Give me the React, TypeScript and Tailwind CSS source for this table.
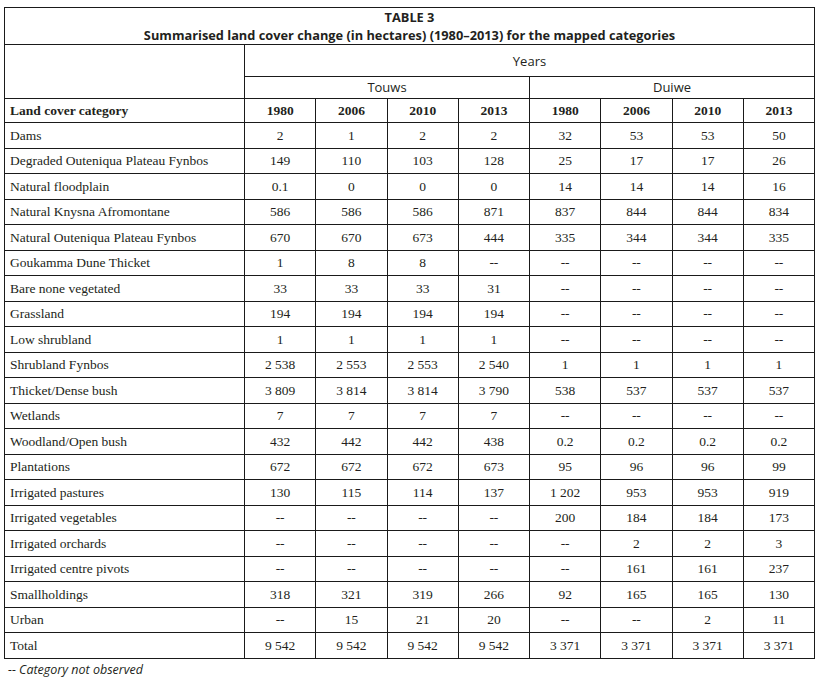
import React from "react";

const rows: [string, string[]][] = [
  ["Dams", ["2", "1", "2", "2", "32", "53", "53", "50"]],
  ["Degraded Outeniqua Plateau Fynbos", ["149", "110", "103", "128", "25", "17", "17", "26"]],
  ["Natural floodplain", ["0.1", "0", "0", "0", "14", "14", "14", "16"]],
  ["Natural Knysna Afromontane", ["586", "586", "586", "871", "837", "844", "844", "834"]],
  ["Natural Outeniqua Plateau Fynbos", ["670", "670", "673", "444", "335", "344", "344", "335"]],
  ["Goukamma Dune Thicket", ["1", "8", "8", "--", "--", "--", "--", "--"]],
  ["Bare none vegetated", ["33", "33", "33", "31", "--", "--", "--", "--"]],
  ["Grassland", ["194", "194", "194", "194", "--", "--", "--", "--"]],
  ["Low shrubland", ["1", "1", "1", "1", "--", "--", "--", "--"]],
  ["Shrubland Fynbos", ["2 538", "2 553", "2 553", "2 540", "1", "1", "1", "1"]],
  ["Thicket/Dense bush", ["3 809", "3 814", "3 814", "3 790", "538", "537", "537", "537"]],
  ["Wetlands", ["7", "7", "7", "7", "--", "--", "--", "--"]],
  ["Woodland/Open bush", ["432", "442", "442", "438", "0.2", "0.2", "0.2", "0.2"]],
  ["Plantations", ["672", "672", "672", "673", "95", "96", "96", "99"]],
  ["Irrigated pastures", ["130", "115", "114", "137", "1 202", "953", "953", "919"]],
  ["Irrigated vegetables", ["--", "--", "--", "--", "200", "184", "184", "173"]],
  ["Irrigated orchards", ["--", "--", "--", "--", "--", "2", "2", "3"]],
  ["Irrigated centre pivots", ["--", "--", "--", "--", "--", "161", "161", "237"]],
  ["Smallholdings", ["318", "321", "319", "266", "92", "165", "165", "130"]],
  ["Urban", ["--", "15", "21", "20", "--", "--", "2", "11"]],
  ["Total", ["9 542", "9 542", "9 542", "9 542", "3 371", "3 371", "3 371", "3 371"]],
];

const years = ["1980", "2006", "2010", "2013", "1980", "2006", "2010", "2013"];

const sans = "font-['Open_Sans',sans-serif]";
const serif = "font-['Liberation_Serif',serif]";
const cell = "border border-[#1a1a1a] p-0";

export default function App() {
  return (
    <div className="w-[816px] h-[690px] bg-white text-[#231f20] pt-[7px] pl-[4px]">
      <table className="table-fixed border-collapse w-[810px]">
        <colgroup>
          <col className="w-[240px]" />
          {years.map((_, i) => (
            <col key={i} className="w-[71.25px]" />
          ))}
        </colgroup>
        <tbody>
          <tr className="h-[37px]">
            <td colSpan={9} className={`${cell} ${sans} text-center font-bold text-[12.8px] leading-[18px]`}>
              TABLE 3
              <br />
              Summarised land cover change (in hectares) (1980–2013) for the mapped categories
            </td>
          </tr>
          <tr className="h-[32px]">
            <td rowSpan={2} className={cell}></td>
            <td colSpan={8} className={`${cell} ${sans} text-center text-[13px] pt-[2px]`}>
              Years
            </td>
          </tr>
          <tr className="h-[22px]">
            <td colSpan={4} className={`${cell} ${sans} text-center text-[13px]`}>
              Touws
            </td>
            <td colSpan={4} className={`${cell} ${sans} text-center text-[13px]`}>
              Duiwe
            </td>
          </tr>
          <tr className="h-[24px]">
            <td className={`${cell} ${serif} font-bold text-[13.5px] pl-[5px] pt-[1px]`}>Land cover category</td>
            {years.map((y, i) => (
              <td key={i} className={`${cell} ${serif} font-bold text-[13.5px] text-center pt-[1px]`}>
                {y}
              </td>
            ))}
          </tr>
          {rows.map(([name, vals], r) => (
            <tr key={r} className="h-[25.5px]">
              <td className={`${cell} ${serif} text-[13.5px] pl-[5px] pt-[1px]`}>{name}</td>
              {vals.map((v, i) => (
                <td key={i} className={`${cell} ${serif} text-[13.5px] text-center pt-[1px]`}>
                  {v}
                </td>
              ))}
            </tr>
          ))}
        </tbody>
      </table>
      <div className={`${sans} italic text-[12.5px] mt-[2px] pl-[4px]`}>-- Category not observed</div>
    </div>
  );
}
